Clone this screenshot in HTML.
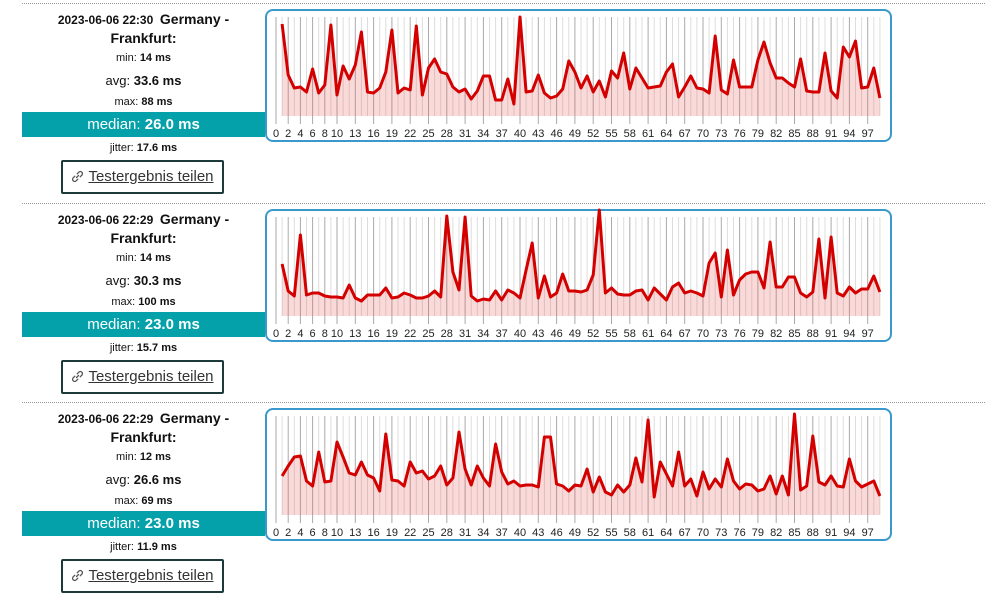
<!DOCTYPE html>
<html><head><meta charset="utf-8">
<style>
body{margin:0;width:998px;height:594px;background:#fff;font-family:"Liberation Sans",sans-serif;color:#111;position:relative;overflow:hidden}
.sep{position:absolute;left:22px;width:963px;border-top:1px dotted #999;height:0}
.t{position:absolute;left:22px;width:243px;text-align:center;white-space:nowrap}
.med{position:absolute;left:22px;width:243px;height:25px;background:#05a1aa;color:#fff;text-align:center;font-size:15px;line-height:25px}
.btn{position:absolute;left:61px;top:160px;width:159px;height:30px;border:2px solid #1c3a3a;border-radius:2px;font-size:15px;line-height:30px;text-align:center;color:#333}
.btn u{color:#333}
.btn svg{position:static;vertical-align:-2px;margin-right:4px}
.box{position:absolute;left:265px;top:9px;width:623px;height:129px;border:2px solid #3a98cc;border-radius:8px}
svg.c{position:absolute;left:0;top:0}
</style></head><body>
<div id="root"></div>
<script>
var D=[
[24,75,88,87,92,69,93,85,25,95,66,79,65,32,92,93,88,72,30,93,88,90,26,95,68,59,72,74,87,92,89,99,91,76,76,100,100,79,104,17,92,91,75,93,98,96,89,61,72,88,76,92,81,97,71,78,53,89,68,78,88,87,86,72,64,97,87,76,88,89,93,36,90,94,60,87,87,87,60,42,63,78,78,83,87,59,91,92,92,53,91,98,47,57,41,88,87,68,98],
[64,91,96,35,95,93,93,96,97,97,98,85,98,101,95,95,95,88,98,97,93,95,98,98,96,91,97,16,72,90,17,96,101,99,100,91,100,90,93,98,70,43,98,76,97,93,74,91,91,92,90,75,10,93,88,94,95,95,91,90,100,88,94,100,87,83,93,91,93,96,63,53,97,50,95,80,74,72,72,88,42,87,87,77,77,93,97,92,39,98,37,93,96,87,93,89,89,76,92],
[77,67,58,57,82,87,53,83,82,43,58,74,76,63,76,79,92,35,81,82,87,63,74,72,80,77,67,86,79,33,70,86,67,79,87,45,73,85,82,87,86,86,88,38,38,85,87,92,86,87,70,93,78,93,96,86,93,86,59,83,21,98,63,75,87,53,87,80,97,73,90,80,88,60,82,90,85,86,92,90,77,95,77,96,15,91,87,37,83,86,77,87,88,60,82,88,85,82,97]];
var info=[["22:30","14","33.6","88","26.0","17.6"],["22:29","14","30.3","100","23.0","15.7"],["22:29","12","26.6","69","23.0","11.9"]];
var labels=[0,2,4,6,8,10,13,16,19,22,25,28,31,34,37,40,43,46,49,52,55,58,61,64,67,70,73,76,79,82,85,88,91,94,97];
var icon='<svg width="13" height="13" viewBox="0 0 13 13"><g fill="none" stroke="#555" stroke-width="1.3" stroke-linecap="round"><path d="M5.5 7.5 L7.5 5.5"/><path d="M6.2 3.8 L7.8 2.2 a2 2 0 0 1 3 3 L9.2 6.8"/><path d="M3.8 6.2 L2.2 7.8 a2 2 0 0 0 3 3 L6.8 9.2"/></g></svg>';
var h='';
for(var s=0;s<3;s++){
 var o=s*199.5, I=info[s];
 h+='<div class="sep" style="top:'+(3+o)+'px"></div>';
 h+='<div class="t" style="top:'+(10+o)+'px;font-size:12px;font-weight:bold;line-height:18px">2023-06-06 '+I[0]+' &nbsp;<span style="font-size:14px">Germany -</span></div>';
 h+='<div class="t" style="top:'+(29+o)+'px;font-size:14px;font-weight:bold;line-height:18px">Frankfurt:</div>';
 h+='<div class="t" style="top:'+(51+o)+'px;font-size:11px;line-height:15px">min: <b>'+I[1]+' ms</b></div>';
 h+='<div class="t" style="top:'+(73+o)+'px;font-size:13px;line-height:16px">avg: <b>'+I[2]+' ms</b></div>';
 h+='<div class="t" style="top:'+(95+o)+'px;font-size:11px;line-height:15px">max: <b>'+I[3]+' ms</b></div>';
 h+='<div class="med" style="top:'+(112+o)+'px">median: <b>'+I[4]+' ms</b></div>';
 h+='<div class="t" style="top:'+(141+o)+'px;font-size:11px;line-height:15px">jitter: <b>'+I[5]+' ms</b></div>';
 h+='<div class="btn" style="top:'+(160+o)+'px">'+icon+'<u>Testergebnis teilen</u></div>';
 h+='<div class="box" style="top:'+(9+o)+'px"></div>';
 var sv='<svg class="c" width="998" height="200" style="top:'+o+'px;overflow:visible">';
 for(var i=0;i<=99;i++){var x=276+i*6.1;var dark=labels.indexOf(i)>=0;
  sv+='<line x1="'+x+'" y1="17" x2="'+x+'" y2="'+(dark?124:116)+'" stroke="'+(dark?'#aaa':'#ddd')+'" stroke-width="1"/>';}
 var pts=[];for(var i=1;i<=99;i++){pts.push((276+i*6.1).toFixed(1)+','+D[s][i-1]);}
 sv+='<polygon points="282.1,116 '+pts.join(' ')+' 879.9,116" fill="rgba(230,80,80,0.22)"/>';
 sv+='<polyline points="'+pts.join(' ')+'" fill="none" stroke="#d40000" stroke-width="3" stroke-linejoin="round"/>';
 for(var k=0;k<labels.length;k++){sv+='<text x="'+(276+labels[k]*6.1)+'" y="137" font-size="11" text-anchor="middle" fill="#222" font-family="Liberation Sans,sans-serif">'+labels[k]+'</text>';}
 sv+='</svg>';
 h+=sv;
}
document.getElementById('root').innerHTML=h;
</script>
</body></html>
